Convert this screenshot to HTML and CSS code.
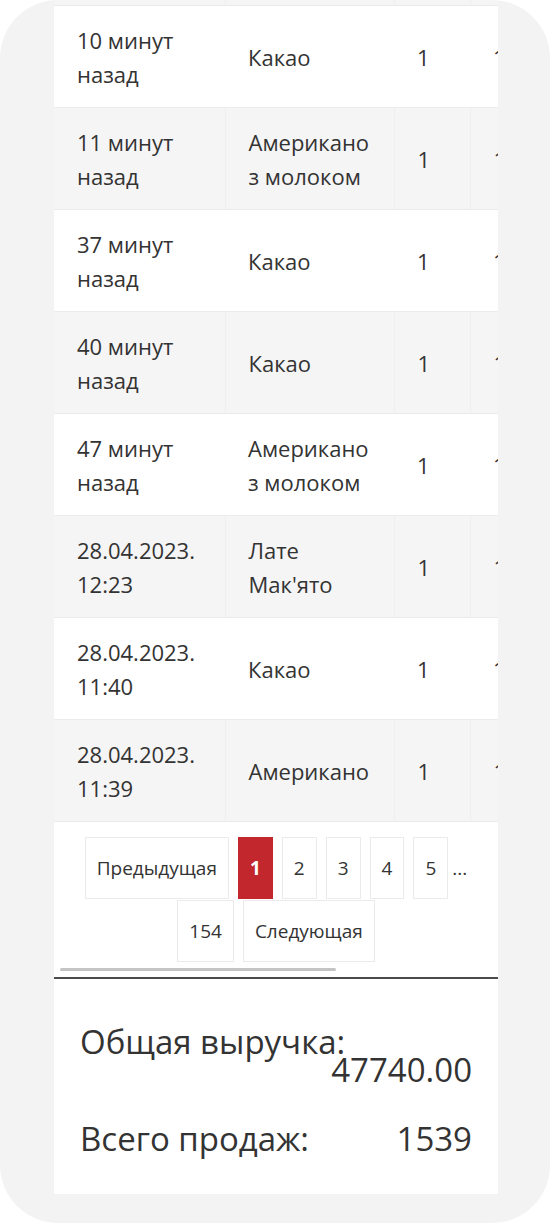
FILE: index.html
```html
<!DOCTYPE html>
<html lang="ru">
<head>
<meta charset="utf-8">
<title>Продажи</title>
<link rel="stylesheet" href="styles.css">
</head>
<body>
<div class="frame">
  <div class="card">
    <div class="table-scroll">
      <table class="sales">
        <colgroup>
          <col class="c-date"><col class="c-name"><col class="c-qty"><col class="c-sum">
        </colgroup>
        <tbody>
          <tr class="cut"><td></td><td></td><td></td><td></td></tr>
          <tr><td>10 минут<br>назад</td><td>Какао</td><td>1</td><td>1</td></tr>
          <tr><td>11 минут<br>назад</td><td>Американо<br>з молоком</td><td>1</td><td>1</td></tr>
          <tr><td>37 минут<br>назад</td><td>Какао</td><td>1</td><td>1</td></tr>
          <tr><td>40 минут<br>назад</td><td>Какао</td><td>1</td><td>1</td></tr>
          <tr><td>47 минут<br>назад</td><td>Американо<br>з молоком</td><td>1</td><td>1</td></tr>
          <tr><td>28.04.2023.<br>12:23</td><td>Лате<br>Мак'ято</td><td>1</td><td>1</td></tr>
          <tr><td>28.04.2023.<br>11:40</td><td>Какао</td><td>1</td><td>1</td></tr>
          <tr><td>28.04.2023.<br>11:39</td><td>Американо</td><td>1</td><td>1</td></tr>
        </tbody>
      </table>
    </div>
    <nav class="pager">
      <a class="page">Предыдущая</a>
      <a class="page active">1</a>
      <a class="page">2</a>
      <a class="page">3</a>
      <a class="page">4</a>
      <a class="page">5</a>
      <span class="dots">...</span>
      <a class="page">154</a>
      <a class="page">Следующая</a>
    </nav>
    <div class="scrollbar"></div>
    <div class="divider"></div>
    <div class="summary">
      <div class="stat"><span class="label">Общая выручка:</span><span class="val">47740.00</span></div>
      <div class="stat"><span class="label">Всего продаж:</span><span class="val">1539</span></div>
    </div>
  </div>
</div>
</body>
</html>
```

FILE: styles.css
```css
html, body {
  margin: 0;
  padding: 0;
  background: #ffffff;
}

body {
  font-family: "Open Sans", "Noto Sans", sans-serif;
  color: #333333;
}

.frame {
  width: 550px;
  height: 1223px;
  background: #f3f3f3;
  border-radius: 58px;
  overflow: hidden;
}

.card {
  width: 444px;
  margin-left: 54px;
  background: #ffffff;
}

.table-scroll {
  width: 444px;
  overflow: hidden;
}

.sales {
  table-layout: fixed;
  width: 616px;
  border-collapse: collapse;
  font-size: 22px;
  line-height: 34px;
}

.c-date { width: 171px; }
.c-name { width: 169px; }
.c-qty { width: 76px; }
.c-sum { width: 200px; }

.sales td {
  height: 101px;
  padding: 0 22px 0 23px;
  vertical-align: middle;
  border-bottom: 1px solid #ebebeb;
  white-space: nowrap;
}

.sales tr:nth-child(odd) td {
  background: #f5f5f5;
}

.sales tr:nth-child(odd) td + td {
  border-left: 1px solid #efefef;
}

.sales tr.cut td {
  height: 5px;
  padding: 0;
}

.pager {
  display: flex;
  flex-wrap: wrap;
  justify-content: center;
  align-items: center;
  gap: 1px 9px;
  padding: 15px 20px 0;
  font-size: 19px;
}

.page {
  box-sizing: border-box;
  height: 62px;
  display: flex;
  align-items: center;
  padding: 0 11px;
  border: 1px solid #ebebeb;
  color: #333333;
}

.page.active {
  background: #c1272d;
  border-color: #c1272d;
  color: #ffffff;
  font-weight: 700;
}

.dots {
  margin-left: -5px;
}

.scrollbar {
  width: 276px;
  height: 3px;
  margin: 6px 0 0 6px;
  background: #c4c4c4;
  border-radius: 2px;
}

.divider {
  height: 2px;
  margin-top: 6px;
  background: #4a4a4a;
}

.summary {
  padding: 49px 26px 41px;
}

.stat {
  display: flex;
  flex-wrap: wrap;
  justify-content: space-between;
  font-size: 33px;
  line-height: 28px;
}

.stat .val {
  margin-left: auto;
}

.stat + .stat {
  margin-top: 41px;
}
```
